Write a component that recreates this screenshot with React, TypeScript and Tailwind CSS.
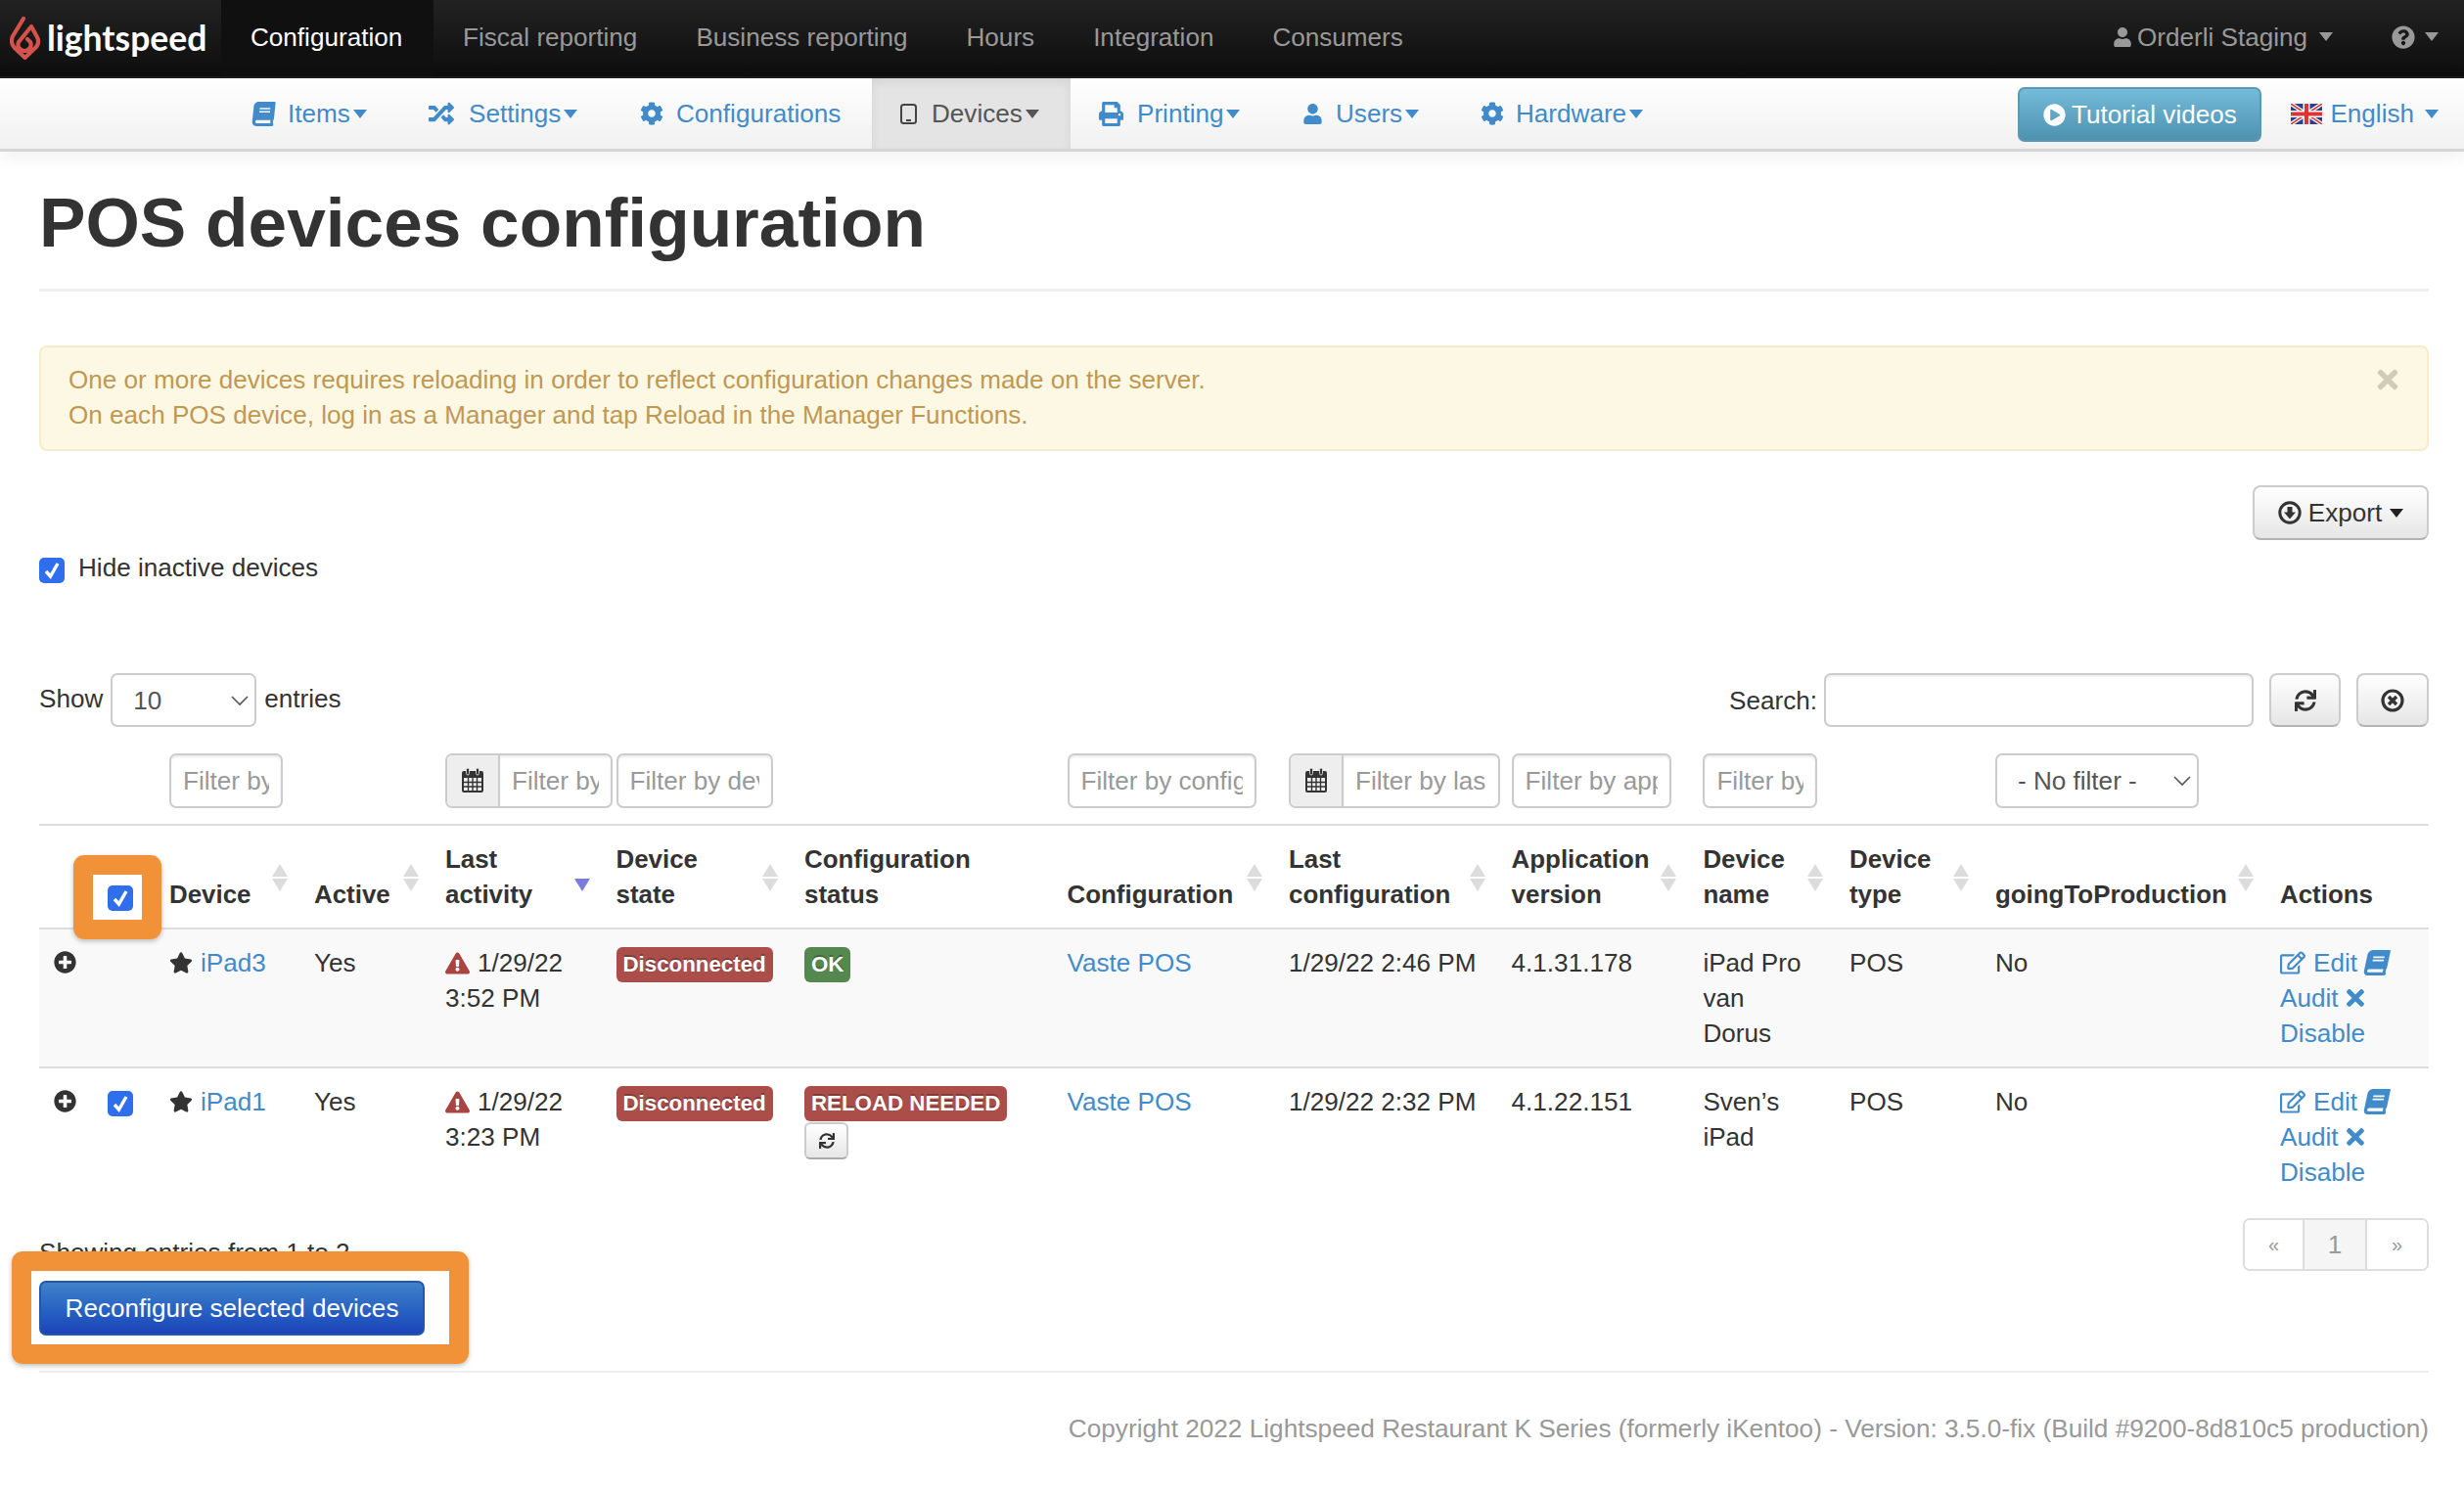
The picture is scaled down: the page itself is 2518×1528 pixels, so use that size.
import React from "react";
import {
  FaBook, FaRandom, FaCog, FaPrint, FaUser, FaPlayCircle, FaQuestionCircle, FaPlusCircle, FaStar,
  FaExclamationTriangle, FaRegEdit, FaSync, FaTimes,
} from "react-icons/fa";

function Caret({ color = "border-t-[#428bca]" }: { color?: string }) {
  return <span className={`inline-block w-0 h-0 border-x-[7px] border-x-transparent border-t-[9px] ${color}`} />;
}

function Check() {
  return (
    <span className="flex w-[26px] h-[26px] rounded-[5px] bg-[#2f6fed] items-center justify-center">
      <svg width="18" height="18" viewBox="0 0 18 18"><path d="M3 10 L7.5 15 L15 2" fill="none" stroke="#fff" strokeWidth="3.4" /></svg>
    </span>
  );
}

function Sort({ active }: { active?: boolean }) {
  return (
    <svg className="absolute top-[39px] right-[13px]" width="16" height="29" viewBox="0 0 16 29">
      {!active && <path d="M8 0 L16 13 L0 13 Z" fill="#dcdcdc" />}
      <path d="M0 15 L16 15 L8 28 Z" fill={active ? "#7c7cde" : "#dcdcdc"} />
    </svg>
  );
}

function Cal() {
  return (
    <svg width="24" height="26" viewBox="0 0 24 26" fill="none">
      <rect x="1" y="3" width="22" height="22" rx="2" fill="#333" />
      <rect x="3" y="10" width="18" height="13" fill="#eee" />
      <path d="M7.5 10V23M12 10V23M16.5 10V23M3 14.5H21M3 19H21" stroke="#333" strokeWidth="1.4" />
      <rect x="5.5" y="0" width="3" height="7" rx="1.5" fill="#333" stroke="#eee" strokeWidth="0.8" />
      <rect x="15.5" y="0" width="3" height="7" rx="1.5" fill="#333" stroke="#eee" strokeWidth="0.8" />
    </svg>
  );
}

function Flag() {
  return (
    <svg width="32" height="21" viewBox="0 0 32 21">
      <rect width="32" height="21" fill="#2b3f8f" />
      <path d="M0 0L32 21M32 0L0 21" stroke="#fff" strokeWidth="4" />
      <path d="M0 0L32 21M32 0L0 21" stroke="#d33" strokeWidth="1.5" />
      <path d="M16 0V21M0 10.5H32" stroke="#fff" strokeWidth="7" />
      <path d="M16 0V21M0 10.5H32" stroke="#d33" strokeWidth="4" />
    </svg>
  );
}

function Logo() {
  return (
    <svg width="32" height="46" viewBox="0 0 32 46" fill="none" stroke="#d4524c" strokeWidth="4.2" strokeLinejoin="round" strokeLinecap="round">
      <path d="M14 3 L3 21 C1 26 2 30 5 33 L15.5 43 L26 33 C29 30 30 26 28 22 L22 11 L9 27 C7 32 11 36 15 36 C20 36 23 31 21 27 L18 24" />
    </svg>
  );
}

function ExportIcon() {
  return (
    <svg width="24" height="24" viewBox="0 0 24 24">
      <circle cx="12" cy="12" r="10.2" fill="none" stroke="#333" strokeWidth="3" />
      <path d="M9.5 6 H14.5 V11.5 H18 L12 18.5 L6 11.5 H9.5 Z" fill="#333" />
    </svg>
  );
}

function ResetIcon() {
  return (
    <svg width="24" height="24" viewBox="0 0 24 24">
      <circle cx="12" cy="12" r="10" fill="none" stroke="#333" strokeWidth="3.2" />
      <path d="M8 8 L16 16 M16 8 L8 16" stroke="#333" strokeWidth="3.4" />
    </svg>
  );
}

function TextInput({ w, ph }: { w: string; ph: string }) {
  return (
    <input
      placeholder={ph}
      className={`${w} h-[56px] block rounded-[7px] border-2 border-[#ccc] bg-white px-[12px] text-[26.1px] text-[#555] placeholder:text-[#999] shadow-[inset_0_2px_2px_rgba(0,0,0,0.08)] outline-none`}
    />
  );
}

function DateInput({ w, ph }: { w: string; ph: string }) {
  return (
    <div className={`${w} flex h-[56px] rounded-[7px] border-2 border-[#ccc] overflow-hidden`}>
      <span className="flex w-[54px] shrink-0 items-center justify-center bg-[#eee] border-r-2 border-[#ccc]"><Cal /></span>
      <input placeholder={ph} className="min-w-0 flex-1 px-[12px] text-[26.1px] placeholder:text-[#999] outline-none shadow-[inset_0_2px_2px_rgba(0,0,0,0.08)]" />
    </div>
  );
}

function Chevron() {
  return (
    <svg className="absolute top-1/2 right-[8px] -translate-y-1/2 pointer-events-none" width="18" height="11" viewBox="0 0 18 11" fill="none">
      <path d="M1 1.5 L9 9.5 L17 1.5" stroke="#555" strokeWidth="1.6" />
    </svg>
  );
}

const subItems = [
  { label: "Items", w: "w-[181px]", slot: "w-[37px]", icon: <FaBook size={25} className="-skew-x-6" />, caret: true },
  { label: "Settings", w: "w-[216px]", slot: "w-[41px]", icon: <FaRandom size={26} />, caret: true },
  { label: "Configurations", w: "w-[266px]", slot: "w-[37px]", icon: <FaCog size={24} />, caret: false },
];
const subItems2 = [
  { label: "Printing", w: "w-[208px]", slot: "w-[39px]", icon: <FaPrint size={25} />, caret: true },
  { label: "Users", w: "w-[182px]", slot: "w-[34px]", icon: <FaUser size={21} />, caret: true },
  { label: "Hardware", w: "w-[228px]", slot: "w-[36px]", icon: <FaCog size={24} />, caret: true },
];

function SubItem({ it }: { it: (typeof subItems)[number] }) {
  return (
    <a className={`${it.w} flex items-center pl-[29px] text-[#428bca]`}>
      <span className={`${it.slot} shrink-0 flex items-center`}>{it.icon}</span>
      <span>{it.label}</span>
      {it.caret && <span className="ml-[3px] flex"><Caret /></span>}
    </a>
  );
}

function Actions() {
  return (
    <div className="text-[#428bca]">
      <div className="flex items-center">
        <FaRegEdit size={26} className="mr-[8px]" />Edit<FaBook size={26} className="ml-[7px] -skew-x-12" />
      </div>
      <div className="flex items-center">Audit<FaTimes size={26} className="ml-[5px]" /></div>
      <div>Disable</div>
    </div>
  );
}

function Label({ children, color }: { children: React.ReactNode; color: string }) {
  return (
    <span className={`${color} inline-block h-[36px] rounded-[6px] px-[7px] text-[22.3px] leading-[36px] font-bold text-white [text-shadow:0_-2px_0_rgba(0,0,0,0.25)]`}>
      {children}
    </span>
  );
}

function When({ d, t }: { d: string; t: string }) {
  return (
    <div>
      <div className="flex items-center">
        <FaExclamationTriangle size={25} className="mr-[8px] text-[#a94442]" />{d}
      </div>
      <div>{t}</div>
    </div>
  );
}

const td = "px-[14px] pt-[16px] pb-[16px] align-top";
const th = "relative px-[14px] py-[16px] text-left align-bottom font-bold text-[25.9px] border-b-2 border-[#ddd]";
const fd = "px-[14px] pb-[16px] border-b-2 border-[#ddd]";
const top = "flex items-center px-[30px] pb-[3px]";

export default function App() {
  return (
    <div className="min-h-[1528px] bg-white font-['Liberation_Sans',Arial,sans-serif] text-[26.1px] leading-[36px] text-[#333] overflow-hidden">
      <header className="flex h-[80px] bg-gradient-to-b from-[#222] to-[#0e0e0e] border-b-2 border-[#1c1c1c] text-[#999]">
        <a className="flex w-[226px] items-center pl-[10px]">
          <Logo />
          <span className="ml-[6px] font-['Lato',sans-serif] text-[35.5px] font-bold text-white leading-none">lightspeed</span>
        </a>
        <a className="flex items-center px-[30px] pb-[3px] w-[217px] bg-[#101010] text-white">Configuration</a>
        <a className={top}>Fiscal reporting</a>
        <a className={top}>Business reporting</a>
        <a className={top}>Hours</a>
        <a className={top}>Integration</a>
        <a className={top}>Consumers</a>
        <div className="ml-auto flex items-center pr-[26px] pb-[3px]">
          <FaUser size={20} className="mr-[5px]" />
          <span>Orderli Staging</span>
          <span className="ml-[12px] flex"><Caret color="border-t-[#999]" /></span>
          <FaQuestionCircle size={24} className="ml-[60px]" />
          <span className="ml-[10px] flex"><Caret color="border-t-[#999]" /></span>
        </div>
      </header>

      <nav className="flex h-[75px] bg-gradient-to-b from-white to-[#f1f1f1] border-b-[3px] border-[#d6d6d6] shadow-[0_3px_20px_rgba(0,0,0,0.08)] pl-[228px] relative">
        {subItems.map((it) => <SubItem key={it.label} it={it} />)}
        <a className="flex w-[203px] items-center pl-[29px] bg-[#e4e4e4] text-[#555] shadow-[inset_0_4px_10px_rgba(0,0,0,0.07)]">
          <span className="w-[32px] shrink-0 flex items-center">
            <svg width="17" height="21" viewBox="0 0 17 21" fill="none"><rect x="1" y="1" width="15" height="19" rx="2.5" stroke="#444" strokeWidth="2" /><rect x="6" y="16" width="5" height="2" fill="#444" /></svg>
          </span>
          <span>Devices</span>
          <span className="ml-[3px] flex"><Caret color="border-t-[#555]" /></span>
        </a>
        {subItems2.map((it) => <SubItem key={it.label} it={it} />)}
        <div className="ml-auto flex items-center pr-[26px]">
          <a className="mt-[2px] flex h-[56px] w-[249px] items-center justify-center rounded-[7px] border-2 border-[#5b98b4] bg-gradient-to-b from-[#74bbda] to-[#4e92b0] text-white">
            <FaPlayCircle size={23} className="mr-[6px]" />Tutorial videos
          </a>
          <span className="ml-[30px] mr-[8px] flex"><Flag /></span>
          <span className="text-[#428bca]">English</span>
          <span className="ml-[11px] flex"><Caret /></span>
        </div>
      </nav>

      <main className="pl-[40px] pr-[36px]">
        <h1 className="pt-[38px] text-[71.2px] leading-[70px] font-bold text-[#333] h-[143px] border-b-[3px] border-[#eee]">POS devices configuration</h1>

        <div className="relative mt-[55px] h-[108px] rounded-[8px] border-2 border-[#faebcc] bg-[#fcf8e3] px-[28px] py-[15px] text-[#c09853]">
          <div>One or more devices requires reloading in order to reflect configuration changes made on the server.</div>
          <div>On each POS device, log in as a Manager and tap Reload in the Manager Functions.</div>
          <FaTimes size={30} className="absolute right-[25px] top-[18px] text-[#d0ccb8]" />
        </div>

        <div className="mt-[35px] flex justify-end">
          <button className="flex h-[56px] w-[180px] items-center justify-center rounded-[8px] border-2 border-[#ccc] border-b-[#b3b3b3] bg-gradient-to-b from-white to-[#e6e6e6]">
            <span className="mr-[7px] flex"><ExportIcon /></span>Export<span className="ml-[8px] flex"><Caret color="border-t-[#222]" /></span>
          </button>
        </div>

        <div className="mt-[18px] flex items-start">
          <span><Check /></span>
          <span className="ml-[14px] -mt-[8px]">Hide inactive devices</span>
        </div>

        <div className="mt-[90px] flex items-center h-[55px]">
          <span className="pb-[4px]">Show</span>
          <div className="relative ml-[8px] mr-[8px]">
            <select className="appearance-none block w-[149px] h-[55px] rounded-[7px] border-2 border-[#ccc] bg-white pl-[21px] text-[26.1px] text-[#555] outline-none"><option>10</option></select>
            <Chevron />
          </div>
          <span className="pb-[4px]">entries</span>
          <span className="ml-auto mr-[7px]">Search:</span>
          <input className="h-[55px] w-[439px] rounded-[7px] border-2 border-[#ccc] shadow-[inset_0_2px_2px_rgba(0,0,0,0.06)] outline-none" />
          <button className="ml-[16px] flex h-[55px] w-[73px] items-center justify-center rounded-[8px] border-2 border-[#ccc] border-b-[#b3b3b3] bg-gradient-to-b from-white to-[#e6e6e6]"><FaSync size={22} /></button>
          <button className="ml-[16px] flex h-[55px] w-[74px] items-center justify-center rounded-[8px] border-2 border-[#ccc] border-b-[#b3b3b3] bg-gradient-to-b from-white to-[#e6e6e6]"><ResetIcon /></button>
        </div>

        <table className="mt-[27px] table-fixed w-[2442px]">
          <colgroup>
            <col className="w-[56px]" /><col className="w-[63px]" /><col className="w-[148px]" /><col className="w-[134px]" />
            <col className="w-[174.5px]" /><col className="w-[192.5px]" /><col className="w-[268.5px]" /><col className="w-[226.5px]" />
            <col className="w-[227.6px]" /><col className="w-[195.8px]" /><col className="w-[149.6px]" /><col className="w-[149px]" />
            <col className="w-[291px]" /><col className="w-[166px]" />
          </colgroup>
          <thead>
            <tr>
              <td className={fd} /><td className={fd} />
              <td className={fd}><TextInput w="w-[116px]" ph="Filter by device" /></td>
              <td className={fd} />
              <td className={fd}><DateInput w="w-[171px]" ph="Filter by last activity" /></td>
              <td className={fd}><TextInput w="w-[160px]" ph="Filter by device state" /></td>
              <td className={fd} />
              <td className={fd}><TextInput w="w-[193px]" ph="Filter by configuration" /></td>
              <td className={fd}><DateInput w="w-[216px]" ph="Filter by last configuration" /></td>
              <td className={fd}><TextInput w="w-[163px]" ph="Filter by application version" /></td>
              <td className={fd}><TextInput w="w-[117px]" ph="Filter by device name" /></td>
              <td className={fd} />
              <td className={fd}>
                <div className="relative w-[208px]">
                  <select className="appearance-none block w-[208px] h-[56px] rounded-[7px] border-2 border-[#ccc] bg-white pl-[21px] text-[26.1px] text-[#555] outline-none"><option>- No filter -</option></select>
                  <Chevron />
                </div>
              </td>
              <td className={fd} />
            </tr>
            <tr>
              <th className={th} />
              <th className={th}>
                <span className="relative block w-[26px] h-[26px] mb-[1px]">
                  <Check />
                  <span className="absolute left-[-35px] right-[-29px] top-[-31px] bottom-[-29px] rounded-[11px] border-[20px] border-[#f29238] shadow-[0_2px_5px_rgba(0,0,0,0.25)]" />
                </span>
              </th>
              <th className={th}>Device<Sort /></th>
              <th className={th}>Active<Sort /></th>
              <th className={th}>Last<br />activity<Sort active /></th>
              <th className={th}>Device<br />state<Sort /></th>
              <th className={th}>Configuration<br />status</th>
              <th className={th}>Configuration<Sort /></th>
              <th className={th}>Last<br />configuration<Sort /></th>
              <th className={th + " whitespace-nowrap"}>Application<br />version<Sort /></th>
              <th className={th}>Device<br />name<Sort /></th>
              <th className={th}>Device<br />type<Sort /></th>
              <th className={th}>goingToProduction<Sort /></th>
              <th className={th}>Actions</th>
            </tr>
          </thead>
          <tbody>
            <tr className="bg-[#f9f9f9] border-b-2 border-[#ddd]">
              <td className={td}><FaPlusCircle size={23} className="mt-[6px] ml-[1px]" /></td>
              <td className={td} />
              <td className={td}><div className="flex items-center"><FaStar size={24} className="mr-[8px]" /><a className="text-[#428bca]">iPad3</a></div></td>
              <td className={td}>Yes</td>
              <td className={td}><When d="1/29/22" t="3:52 PM" /></td>
              <td className={td}><Label color="bg-[#ab4e4a]">Disconnected</Label></td>
              <td className={td}><Label color="bg-[#55884f]">OK</Label></td>
              <td className={td}><a className="text-[#428bca]">Vaste POS</a></td>
              <td className={td + " whitespace-nowrap"}>1/29/22 2:46 PM</td>
              <td className={td}>4.1.31.178</td>
              <td className={td}>iPad Pro<br />van<br />Dorus</td>
              <td className={td}>POS</td>
              <td className={td}>No</td>
              <td className={td}><Actions /></td>
            </tr>
            <tr>
              <td className={td}><FaPlusCircle size={23} className="mt-[6px] ml-[1px]" /></td>
              <td className={td}><span className="block mt-[7px]"><Check /></span></td>
              <td className={td}><div className="flex items-center"><FaStar size={24} className="mr-[8px]" /><a className="text-[#428bca]">iPad1</a></div></td>
              <td className={td}>Yes</td>
              <td className={td}><When d="1/29/22" t="3:23 PM" /></td>
              <td className={td}><Label color="bg-[#ab4e4a]">Disconnected</Label></td>
              <td className={td + " whitespace-nowrap"}>
                <Label color="bg-[#ab4e4a]">RELOAD NEEDED</Label>
                <button className="mt-[1px] flex h-[38px] w-[45px] items-center justify-center rounded-[6px] border-2 border-[#ccc] border-b-[#aaa] bg-gradient-to-b from-white to-[#e6e6e6]"><FaSync size={16} /></button>
              </td>
              <td className={td}><a className="text-[#428bca]">Vaste POS</a></td>
              <td className={td + " whitespace-nowrap"}>1/29/22 2:32 PM</td>
              <td className={td}>4.1.22.151</td>
              <td className={td}>Sven’s<br />iPad</td>
              <td className={td}>POS</td>
              <td className={td}>No</td>
              <td className={td}><Actions /></td>
            </tr>
          </tbody>
        </table>

        <div className="mt-[13px] flex items-start justify-between">
          <div className="mt-[17px]">Showing entries from 1 to 2</div>
          <div className="flex h-[54px] rounded-[7px] border-2 border-[#ddd] text-[#999] overflow-hidden">
            <span className="flex w-[61px] items-center justify-center text-[20px] bg-white border-r-2 border-[#ddd]">«</span>
            <span className="flex w-[64px] items-center justify-center bg-[#f5f5f5] border-r-2 border-[#ddd]">1</span>
            <span className="flex w-[61px] items-center justify-center text-[20px] bg-white">»</span>
          </div>
        </div>

        <div className="relative mt-[10px] w-fit">
          <button className="flex h-[56px] w-[394px] items-center justify-center rounded-[7px] border-2 border-[#2356ac] bg-gradient-to-b from-[#3f82ca] to-[#1b43b9] text-white">Reconfigure selected devices</button>
          <span className="absolute left-[-28px] right-[-45px] top-[-30px] bottom-[-29px] rounded-[11px] border-[20px] border-[#f29238] shadow-[0_2px_5px_rgba(0,0,0,0.25)] pointer-events-none" />
        </div>

        <div className="mt-[36px] border-t-[2px] border-[#eee] pt-[39px] text-right text-[26.2px] text-[#999]">
          Copyright 2022 Lightspeed Restaurant K Series (formerly iKentoo) - Version: 3.5.0-fix (Build #9200-8d810c5 production)
        </div>
      </main>
    </div>
  );
}
